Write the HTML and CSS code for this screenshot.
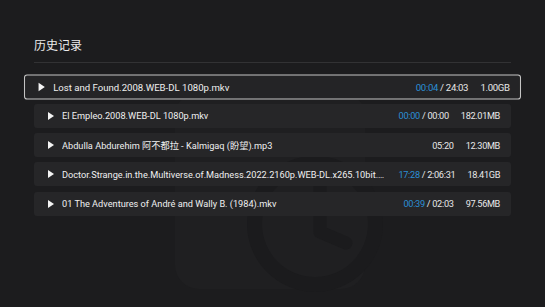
FILE: index.html
```html
<!DOCTYPE html>
<html lang="zh">
<head>
  <meta charset="UTF-8">
  <meta name="viewport" content="width=device-width, initial-scale=1.0">
  <title>历史记录</title>
  <link rel="stylesheet" href="styles.css">
</head>
<body>
  <!-- faint history logo behind the list -->
  <svg class="watermark" width="545" height="307" viewBox="0 0 545 307" xmlns="http://www.w3.org/2000/svg">
    <rect x="175" y="92" width="190" height="197" rx="24" ry="24" fill="#1f1f21"/>
    <circle cx="315" cy="224" r="68" fill="#1b1b1d"/>
    <circle cx="315" cy="224" r="53" fill="#1f1f21"/>
    <path d="M320 178 V232 L346 243" fill="none" stroke="#1b1b1d" stroke-width="13" stroke-linecap="round" stroke-linejoin="round"/>
  </svg>

  <div class="page">
    <h1 class="title">历史记录</h1>
    <div class="divider"></div>

    <ul class="history">
      <li class="row focused">
        <span class="play"></span>
        <span class="name">Lost and Found.2008.WEB-DL 1080p.mkv</span>
        <span class="time"><span class="pos">00:04</span> / 24:03</span>
        <span class="size">1.00GB</span>
      </li>
      <li class="row">
        <span class="play"></span>
        <span class="name">El Empleo.2008.WEB-DL 1080p.mkv</span>
        <span class="time"><span class="pos">00:00</span> / 00:00</span>
        <span class="size">182.01MB</span>
      </li>
      <li class="row">
        <span class="play"></span>
        <span class="name">Abdulla Abdurehim 阿不都拉 - Kalmigaq (盼望).mp3</span>
        <span class="time">05:20</span>
        <span class="size">12.30MB</span>
      </li>
      <li class="row">
        <span class="play"></span>
        <span class="name">Doctor.Strange.in.the.Multiverse.of.Madness.2022.2160p.WEB-DL.x265.10bit.SDR.DDP5.1.Atmos-SMURF.mkv</span>
        <span class="time"><span class="pos">17:28</span> / 2:06:31</span>
        <span class="size">18.41GB</span>
      </li>
      <li class="row">
        <span class="play"></span>
        <span class="name">01 The Adventures of André and Wally B. (1984).mkv</span>
        <span class="time"><span class="pos">00:39</span> / 02:03</span>
        <span class="size">97.56MB</span>
      </li>
    </ul>
  </div>
</body>
</html>
```

FILE: styles.css
```css
body {
  margin: 0;
  width: 545px;
  height: 307px;
  overflow: hidden;
  background-color: #1c1c1e;
  color: #f0f0f0;
  font-family: Roboto, "Noto Sans CJK SC", sans-serif;
}
.watermark {
  position: absolute;
  left: 0;
  top: 0;
  z-index: 0;
}
.page {
  position: relative;
  z-index: 1;
  margin: 0 34px;
  padding-top: 38px;
}
.title {
  margin: 0 0 8px;
  font-size: 12px;
  line-height: 16px;
  font-weight: 400;
  color: #ececec;
}
.divider {
  height: 1px;
  background-color: #323234;
}
.history {
  list-style: none;
  margin: 11.5px 0 0;
  padding: 0;
  display: flex;
  flex-direction: column;
  gap: 5.3px;
}
.row {
  display: flex;
  align-items: center;
  gap: 12px;
  height: 24px;
  box-sizing: border-box;
  padding: 0 11px 0 14px;
  background-color: #262628;
  border-radius: 3px;
  font-size: 9.2px;
  white-space: nowrap;
}
.row.focused {
  padding-left: 13px;
  padding-right: 10px;
  border: 1px solid #c4c4c4;
  background-color: #242426;
  transform: scale(1.042);
}
.play {
  flex: none;
  width: 0;
  height: 0;
  border-top: 4.5px solid transparent;
  border-bottom: 4.5px solid transparent;
  border-left: 6.5px solid #f4f4f4;
  margin-right: -4px;
}
.name {
  flex: 1;
  min-width: 0;
  overflow: hidden;
  text-overflow: ellipsis;
}
.time {
  flex: none;
  color: #e8e8e8;
  letter-spacing: -0.3px;
}
.pos {
  color: #2b8fd6;
}
.size {
  flex: none;
  color: #e8e8e8;
  letter-spacing: -0.35px;
}
```
